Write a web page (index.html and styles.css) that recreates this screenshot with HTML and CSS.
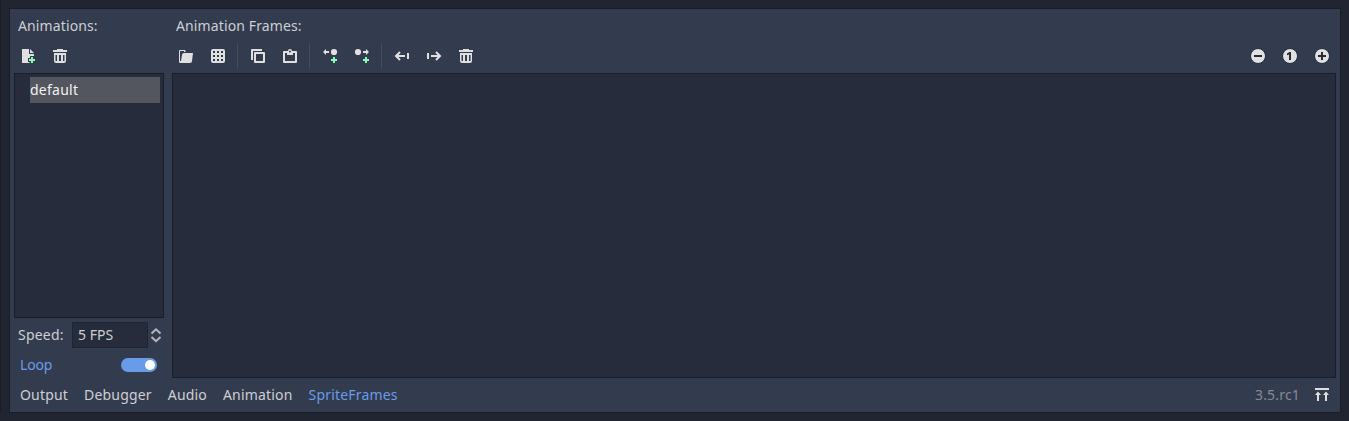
FILE: index.html
```html
<!DOCTYPE html>
<html lang="en">
<head>
<meta charset="utf-8">
<title>SpriteFrames</title>
<link rel="stylesheet" href="styles.css">
</head>
<body>
<svg class="defs" width="0" height="0">
  <symbol id="trash" viewBox="0 0 16 16"><path d="M5 1v1H1v2h14V2h-4V1zM2 5v8a2 2 0 0 0 2 2h8a2 2 0 0 0 2-2V5zm1.500 2h1.500v6H3.500zM7 7h2v6H7zm4 0h1.500v6H11z" fill-rule="evenodd"/></symbol>
</svg>
<div class="window">
<main class="panel">
  <div class="editor">
    <section class="animations">
      <h2 class="label">Animations:</h2>
      <div class="toolbar">
        <button class="tool" aria-label="New animation"><svg viewBox="0 0 16 16"><path d="M2 1v14h7.500v-1H8v-4h2V8h4V6H9V1zm8 0v4h4z"/><path class="green" d="M11 9h2v2h2v2h-2v2h-2v-2H9v-2h2z"/></svg></button>
        <button class="tool" aria-label="Delete animation"><svg><use href="#trash"/></svg></button>
      </div>
      <div class="tree"><div class="tree-item">default</div></div>
      <div class="speed">
        <span class="speed-label">Speed:</span>
        <span class="field">5 FPS</span>
        <svg class="spinner" viewBox="0 0 16 16"><path d="m3.500 6.500 4.500-4.200 4.500 4.200M3.500 10 8 14.200l4.500-4.200"/></svg>
      </div>
      <div class="loop"><span>Loop</span><span class="switch"></span></div>
    </section>
    <section class="frames">
      <h2 class="label">Animation Frames:</h2>
      <div class="toolbar">
        <button class="tool" aria-label="Load"><svg viewBox="0 0 16 16"><path d="M2 2a1 1 0 0 0-1 1v10.500A1.500 1.500 0 0 0 2.500 15H12a2 2 0 0 0 2-2l1-8H6a2 2 0 0 0-2 2l-1 6H2V3h4v1h1.500V3a1 1 0 0 0-1-1z"/></svg></button>
        <button class="tool" aria-label="Sprite sheet"><svg viewBox="0 0 16 16"><path fill-rule="evenodd" d="M3 1a2 2 0 0 0-2 2v10a2 2 0 0 0 2 2h10a2 2 0 0 0 2-2V3a2 2 0 0 0-2-2zm0 2h2v2H3zm4 0h2v2H7zm4 0h2v2h-2zM3 7h2v2H3zm4 0h2v2H7zm4 0h2v2h-2zM3 11h2v2H3zm4 0h2v2H7zm4 0h2v2h-2z"/></svg></button>
        <i class="sep"></i>
        <button class="tool" aria-label="Copy"><svg viewBox="0 0 16 16"><path fill-rule="evenodd" d="M2 1a1 1 0 0 0-1 1v10h2V3h9V1zM5 4a1 1 0 0 0-1 1v9a1 1 0 0 0 1 1h9a1 1 0 0 0 1-1V5a1 1 0 0 0-1-1zm1 2h7v7H6z"/></svg></button>
        <button class="tool" aria-label="Paste"><svg viewBox="0 0 16 16"><path fill-rule="evenodd" d="M8 1a2 2 0 0 0-2 2H2a1 1 0 0 0-1 1v10a1 1 0 0 0 1 1h12a1 1 0 0 0 1-1V4a1 1 0 0 0-1-1h-4a2 2 0 0 0-2-2zm0 1.500a1 1 0 0 1 0 2 1 1 0 0 1 0-2zM3 5h2v2h6V5h2v8H3z"/></svg></button>
        <i class="sep"></i>
        <button class="tool" aria-label="Insert before"><svg viewBox="0 0 16 16"><path d="M4 1v2h3v2H4v2L1 4z"/><circle cx="12" cy="4" r="3.100"/><path class="green" d="M11 9h2v2h2v2h-2v2h-2v-2H9v-2h2z"/></svg></button>
        <button class="tool" aria-label="Insert after"><svg viewBox="0 0 16 16"><circle cx="4" cy="4" r="3.100"/><path d="M12 1v2H9v2h3v2l3-3z"/><path class="green" d="M11 9h2v2h2v2h-2v2h-2v-2H9v-2h2z"/></svg></button>
        <i class="sep"></i>
        <button class="tool" aria-label="Move left"><svg viewBox="0 0 16 16"><path class="stroke" d="M6 4 2 8l4 4M3 8h8M14 5v6"/></svg></button>
        <button class="tool" aria-label="Move right"><svg viewBox="0 0 16 16"><path class="stroke" d="m10 4 4 4-4 4M13 8H5M2 5v6"/></svg></button>
        <button class="tool" aria-label="Delete frame"><svg><use href="#trash"/></svg></button>
        <span class="spacer"></span>
        <button class="tool" aria-label="Zoom out"><svg viewBox="0 0 16 16"><circle class="rim" cx="8" cy="8" r="7.500"/><path class="dark" d="M4 7h8v2H4z"/></svg></button>
        <button class="tool" aria-label="Reset zoom"><svg viewBox="0 0 16 16"><circle class="rim" cx="8" cy="8" r="7.500"/><path class="dark" d="M7.500 4H9v8H7V6.500L5 7.200V5.500z"/></svg></button>
        <button class="tool" aria-label="Zoom in"><svg viewBox="0 0 16 16"><circle class="rim" cx="8" cy="8" r="7.500"/><path class="dark" d="M7 4h2v3h3v2H9v3H7V9H4V7h3z"/></svg></button>
      </div>
      <div class="canvas"></div>
    </section>
  </div>
  <footer class="tabs">
    <span>Output</span><span>Debugger</span><span>Audio</span><span>Animation</span><span class="active">SpriteFrames</span>
    <span class="version">3.5.rc1</span>
    <svg class="expand" viewBox="0 0 16 16"><path d="M1 1h14v2H1zM4 4.500l3 3.500H5v6H3V8H1zM12 4.500l3 3.500h-2v6h-2V8H9z"/></svg>
  </footer>
</main>
</div>
</body>
</html>
```

FILE: styles.css
```css
* { box-sizing: border-box; }
body {
  margin: 0;
  height: 421px;
  overflow: hidden;
  background: #202531;
  color: #cdcfd3;
  font: 14px/20px "Noto Sans", sans-serif;
  letter-spacing: 0.16px;
}
.defs { display: none; }
.window { height: 413px; padding: 8px 8px 0 8px; border-left: 1px solid #191d27; }
.panel {
  width: 1332px;
  height: 405px;
  padding: 0 4px;
  border: 1px solid #191d27;
  background: #333b4f;
}
.editor { display: grid; grid-template-columns: 150px 1fr; gap: 8px; height: 369px; }
.animations, .frames { display: flex; flex-direction: column; min-width: 0; }
.label { margin: 7px 0 0 4px; height: 27px; font-size: 14px; font-weight: 400; line-height: 20px; letter-spacing: 0.12px; }
.toolbar { display: flex; height: 30px; padding-left: 2px; flex: none; }
.frames .toolbar { padding-right: 2px; }
.tool {
  width: 24px;
  height: 26px;
  margin-right: 8px;
  padding: 0;
  border: 0;
  background: none;
  display: grid;
  place-items: center;
}
.tool:last-child { margin-right: 0; }
.tool svg, .expand { width: 16px; height: 16px; fill: #e0e0e0; display: block; }
.tool .green { fill: #84ffb1; }
.stroke { fill: none; stroke: #e0e0e0; stroke-width: 2; }
.rim { stroke: #242a37; stroke-width: 1; }
.dark { fill: #242a37; }
.sep { width: 1px; height: 26px; margin: 0 8px 0 -1px; background: #474e60; }
.spacer { flex: 1; }
.tree, .canvas { background: #262c3b; border: 1px solid #191d27; }
.tree { height: 245px; padding: 3px 3px 0 15px; }
.tree-item { height: 26px; line-height: 26px; background: #53565f; color: #f2f2f2; letter-spacing: 0.24px; }
.canvas { height: 305px; }
.speed { display: flex; align-items: center; height: 26px; margin-top: 4px; padding-left: 4px; }
.speed-label { width: 54px; letter-spacing: 0.22px; }
.field { width: 76px; height: 26px; padding-left: 5px; line-height: 24px; letter-spacing: 0; background: #262c3b; border: 1px solid #202531; }
.spinner { width: 16px; height: 16px; fill: none; stroke: #b6b8bb; stroke-width: 2; }
.loop { display: flex; align-items: center; justify-content: space-between; height: 26px; margin-top: 4px; padding: 0 7px 0 6px; color: #699ce8; letter-spacing: -0.2px; }
.switch { width: 36px; height: 14px; padding: 2px; border-radius: 7px; background: #699ce8; }
.switch::after { content: ""; display: block; width: 10px; height: 10px; margin-left: auto; border-radius: 50%; background: #fff; }
.tabs { display: flex; align-items: center; gap: 16px; height: 34px; padding: 0 6px; letter-spacing: 0.18px; }
.active { color: #699ce8; }
.version { margin-left: auto; color: #868b95; }
.expand { margin-left: -2px; }
```
